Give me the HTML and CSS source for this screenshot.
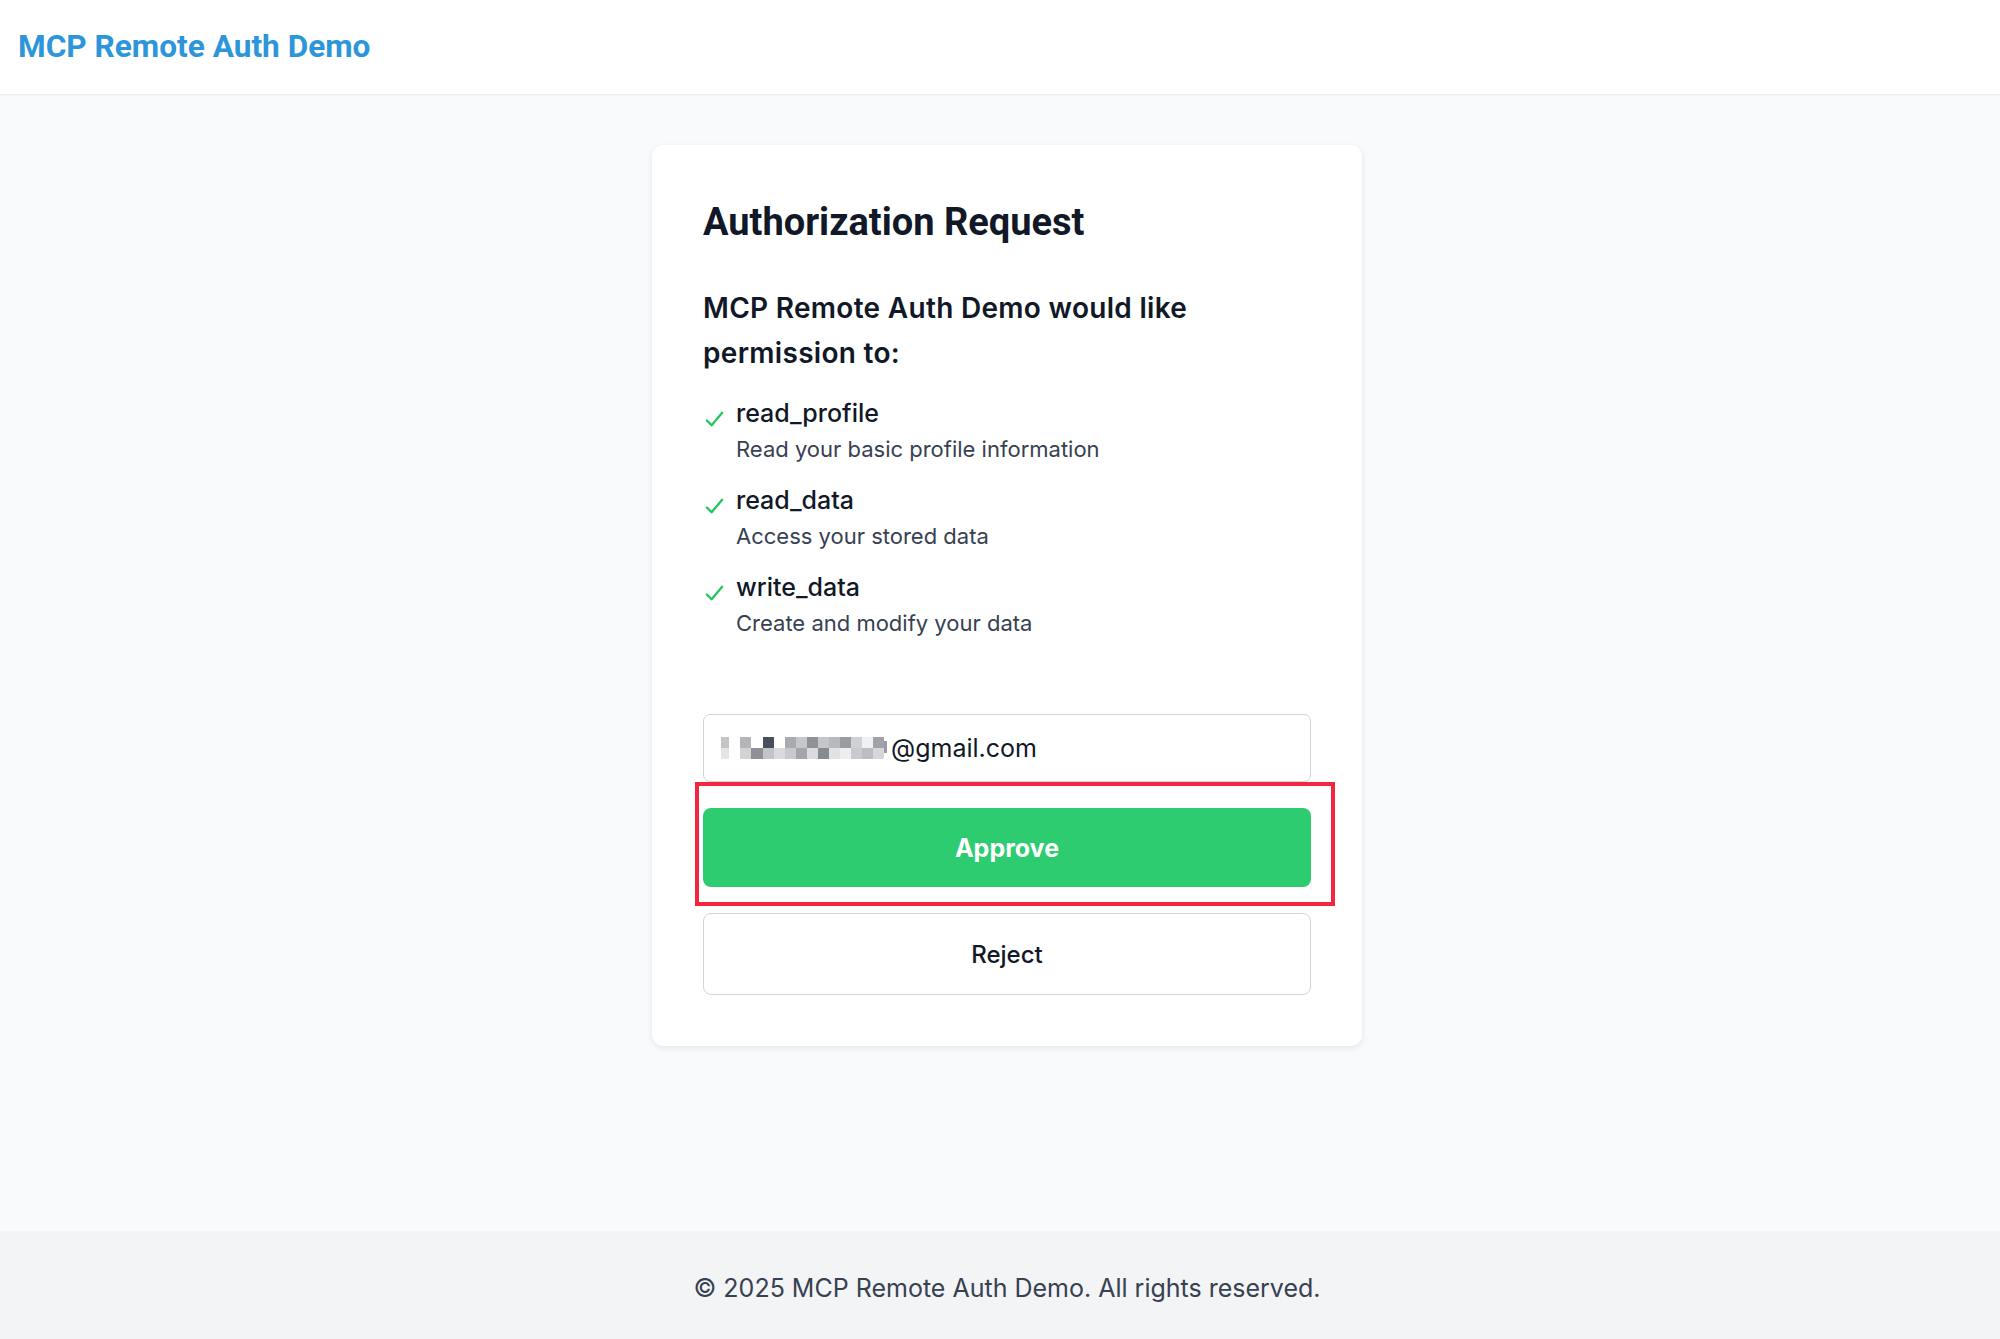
FILE: index.html
```html
<!DOCTYPE html>
<html>
  <head>
    <title>MCP Remote Auth Demo</title>
    <meta charset="UTF-8">
    <link rel="stylesheet" href="styles.css">
  </head>
  <body>
    <header class="top-bar">
      <a class="brand" href="#">MCP Remote Auth Demo</a>
    </header>

    <main class="page">
      <div class="card">
        <h1 class="card-title">Authorization Request</h1>
        <h2 class="lead">MCP Remote Auth Demo would like permission to:</h2>

        <ul class="scopes">
          <li class="scope">
            <svg class="tick" viewBox="0 0 24 24" width="23" height="23"><path d="M4 13l5 5L20 5" /></svg>
            <div>
              <div class="scope-name">read_profile</div>
              <div class="scope-desc">Read your basic profile information</div>
            </div>
          </li>
          <li class="scope">
            <svg class="tick" viewBox="0 0 24 24" width="23" height="23"><path d="M4 13l5 5L20 5" /></svg>
            <div>
              <div class="scope-name">read_data</div>
              <div class="scope-desc">Access your stored data</div>
            </div>
          </li>
          <li class="scope">
            <svg class="tick" viewBox="0 0 24 24" width="23" height="23"><path d="M4 13l5 5L20 5" /></svg>
            <div>
              <div class="scope-name">write_data</div>
              <div class="scope-desc">Create and modify your data</div>
            </div>
          </li>
        </ul>

        <form class="auth-form">
          <div class="email-field">
            <svg class="blur" width="168" height="22" viewBox="0 0 168 22">
              <rect x="0" y="0" width="8" height="11" fill="#c4c4c6"/>
              <rect x="0" y="11" width="8" height="11" fill="#e4e4e6"/>
              <rect x="19" y="0" width="11" height="11" fill="#b4b5b8"/>
              <rect x="19" y="11" width="11" height="11" fill="#d3d3d6"/>
              <rect x="30" y="11" width="12" height="11" fill="#8e9096"/>
              <rect x="42" y="0" width="11" height="11" fill="#4a505b"/>
              <rect x="42" y="11" width="11" height="11" fill="#c3c4c8"/>
              <rect x="53" y="11" width="11" height="11" fill="#d9dadd"/>
              <rect x="64" y="0" width="11" height="11" fill="#a9abaf"/>
              <rect x="64" y="11" width="11" height="11" fill="#c8c9cc"/>
              <rect x="75" y="0" width="11" height="11" fill="#c6c7ca"/>
              <rect x="75" y="11" width="11" height="11" fill="#a3a5aa"/>
              <rect x="86" y="0" width="11" height="11" fill="#8f9298"/>
              <rect x="86" y="11" width="11" height="11" fill="#dadbde"/>
              <rect x="97" y="0" width="11" height="11" fill="#c5c6ca"/>
              <rect x="97" y="11" width="11" height="11" fill="#878a91"/>
              <rect x="108" y="0" width="11" height="11" fill="#b8b9bd"/>
              <rect x="108" y="11" width="11" height="11" fill="#e2e2e5"/>
              <rect x="119" y="0" width="11" height="11" fill="#9a9ca1"/>
              <rect x="119" y="11" width="11" height="11" fill="#eeeef0"/>
              <rect x="130" y="0" width="11" height="11" fill="#d0d1d4"/>
              <rect x="130" y="11" width="11" height="11" fill="#c9cacd"/>
              <rect x="141" y="0" width="11" height="11" fill="#f0f0f2"/>
              <rect x="141" y="11" width="11" height="11" fill="#bcbdc1"/>
              <rect x="152" y="0" width="11" height="11" fill="#a0a2a7"/>
              <rect x="152" y="11" width="11" height="11" fill="#d6d7da"/>
              <rect x="163" y="4" width="3" height="12" fill="#9a9ca1"/>
            </svg>
            <span class="email-text">@gmail.com</span>
          </div>

          <div class="approve-wrap">
            <button type="button" class="btn btn-approve">Approve</button>
            <span class="highlight"></span>
          </div>
          <button type="button" class="btn btn-reject">Reject</button>
        </form>
      </div>
    </main>

    <footer class="foot">
      &copy; 2025 MCP Remote Auth Demo. All rights reserved.
    </footer>
  </body>
</html>
```

FILE: styles.css
```css
html, body {
    margin: 0;
    padding: 0;
}

body {
    min-height: 100vh;
    display: flex;
    flex-direction: column;
    background: #f9fafb;
    font-family: "Inter", "Noto Sans", sans-serif;
    color: #111827;
}

.top-bar {
    height: 95px;
    box-sizing: border-box;
    background: #fff;
    border-bottom: 1px solid #eef0f2;
    box-shadow: 0 1px 2px rgba(0, 0, 0, 0.03);
    display: flex;
    align-items: center;
    padding: 0 18px;
}

.brand {
    font-family: "Roboto", "Inter", sans-serif;
    font-weight: 700;
    font-size: 31.6px;
    color: #2d96db;
    text-decoration: none;
    margin-top: -2px;
}

.page {
    flex: 1;
    padding: 50px 0 0 14px;
}

.card {
    width: 710px;
    box-sizing: border-box;
    margin: 0 auto;
    background: #fff;
    border-radius: 11px;
    box-shadow: 0 2px 6px rgba(0, 0, 0, 0.08), 0 0 1px rgba(0, 0, 0, 0.04);
    padding: 55px 51px 51px;
}

.card-title {
    margin: 0;
    font-family: "Roboto", "Inter", sans-serif;
    font-weight: 700;
    font-size: 38px;
    line-height: 44px;
    color: #111827;
}

.lead {
    margin: 42px 0 0;
    font-weight: 600;
    font-size: 28px;
    line-height: 45px;
    color: #111827;
    letter-spacing: 0.3px;
}

.scopes {
    list-style: none;
    margin: 19px 0 0;
    padding: 0;
}

.scope {
    display: flex;
    align-items: flex-start;
    gap: 10px;
    margin-bottom: 15px;
}

.tick {
    flex: none;
    margin-top: 13px;
    fill: none;
    stroke: #22c55e;
    stroke-width: 2.4;
    stroke-linecap: round;
    stroke-linejoin: round;
}

.scope-name {
    font-weight: 500;
    font-size: 25px;
    line-height: 36px;
    color: #111827;
}

.scope-desc {
    font-size: 22px;
    line-height: 36px;
    color: #374151;
}

.auth-form {
    margin-top: 73px;
    display: flex;
    flex-direction: column;
}

.email-field {
    height: 68px;
    box-sizing: border-box;
    border: 1px solid #d1d5db;
    border-radius: 7px;
    display: flex;
    align-items: center;
    padding: 0 17px;
}

.blur {
    flex: none;
    margin-right: 2px;
}

.email-text {
    font-size: 25px;
    color: #111827;
}

.approve-wrap {
    position: relative;
    margin: 26px 0;
}

.btn {
    display: block;
    width: 100%;
    font-family: "Inter", sans-serif;
    font-size: 24px;
    border-radius: 8px;
    cursor: pointer;
}

.btn-approve {
    height: 79px;
    background: #2ecc71;
    border: none;
    color: #fff;
    font-weight: 700;
    font-size: 25px;
}

.btn-reject {
    height: 82px;
    background: #fff;
    border: 1px solid #d1d5db;
    color: #111827;
    font-weight: 500;
}

.highlight {
    position: absolute;
    left: -8px;
    right: -24px;
    top: -26px;
    bottom: -19px;
    border: 4px solid #f2263e;
    pointer-events: none;
}

.foot {
    height: 108px;
    box-sizing: border-box;
    padding: 6px 0 0 14px;
    background: #f3f4f6;
    display: flex;
    align-items: center;
    justify-content: center;
    font-size: 25px;
    color: #374151;
}
```
